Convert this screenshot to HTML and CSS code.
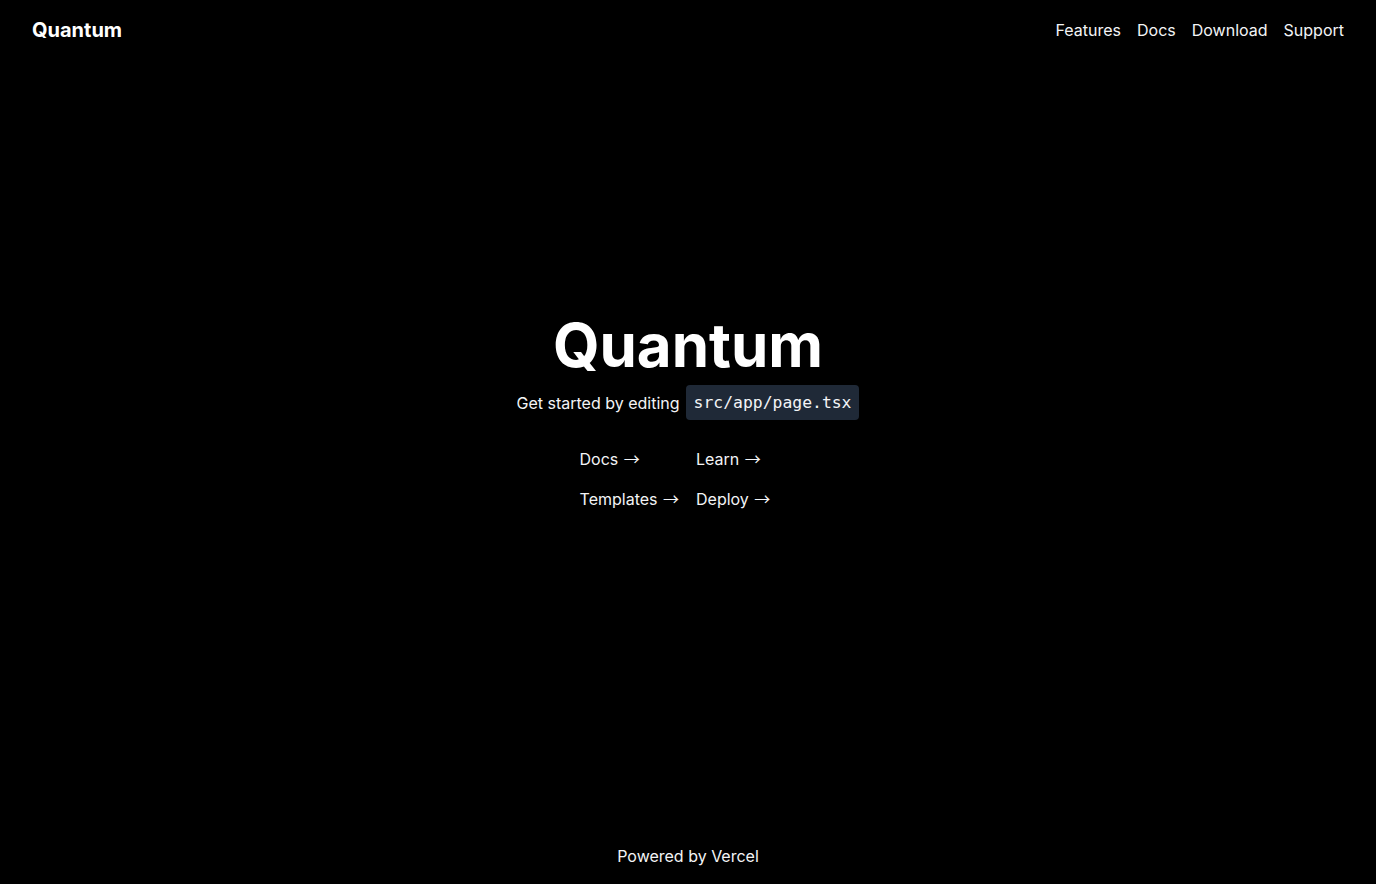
FILE: index.html
```html
<!DOCTYPE html>
<html lang="en">
<head>
<meta charset="utf-8">
<title>Quantum</title>
<link rel="stylesheet" href="styles.css">
</head>
<body>
<div class="page">
  <header class="header">
    <a class="brand" href="#">Quantum</a>
    <nav class="nav">
      <a href="#">Features</a>
      <a href="#">Docs</a>
      <a href="#">Download</a>
      <a href="#">Support</a>
    </nav>
  </header>
  <main class="main">
    <h1 class="title">Quantum</h1>
    <p class="subtitle">Get started by editing <code class="code">src/app/page.tsx</code></p>
    <div class="links">
      <a href="#">Docs <span class="arrow">→</span></a>
      <a href="#">Learn <span class="arrow">→</span></a>
      <a href="#">Templates <span class="arrow">→</span></a>
      <a href="#">Deploy <span class="arrow">→</span></a>
    </div>
  </main>
  <footer class="footer">Powered by Vercel</footer>
</div>
</body>
</html>
```
FILE: styles.css
```css
* { box-sizing: border-box; }
html, body { margin: 0; padding: 0; }
body {
  background: #000;
  color: #fff;
  font-family: Inter, "Noto Sans", sans-serif;
}
a { color: inherit; text-decoration: none; }
.page {
  min-height: 100vh;
  display: flex;
  flex-direction: column;
}
.header {
  display: flex;
  justify-content: space-between;
  align-items: center;
  padding: 16px 32px;
  height: 60px;
}
.brand {
  font-size: 20px;
  line-height: 28px;
  font-weight: 700;
  color: #fff;
}
.nav {
  display: flex;
  gap: 16px;
  font-size: 16px;
  line-height: 24px;
  color: #f3f4f6;
}
.main {
  flex: 1;
  display: flex;
  flex-direction: column;
  align-items: center;
  padding-top: 255px;
}
.title {
  margin: 0;
  font-size: 60px;
  line-height: 60px;
  font-weight: 700;
  color: #fff;
}
.subtitle {
  margin: 10px 0 0;
  font-size: 16px;
  line-height: 24px;
  color: #f3f4f6;
  display: flex;
  align-items: center;
  gap: 6px;
}
.code {
  font-family: "DejaVu Sans Mono", monospace;
  font-size: 16.4px;
  line-height: 19px;
  background: #1f2937;
  border-radius: 4px;
  padding: 8px 8px;
  color: #f3f4f6;
}
.links {
  margin-top: 27px;
  display: grid;
  grid-template-columns: repeat(2, minmax(0, 1fr));
  width: fit-content;
  column-gap: 16px;
  row-gap: 16px;
  font-size: 16px;
  line-height: 24px;
  color: #f3f4f6;
}
.links a {
  display: block;
  height: 24px;
  white-space: nowrap;
}
.arrow {
  font-family: "Noto Sans CJK JP", sans-serif;
  font-size: 16px;
  line-height: 16px;
  margin-left: 1px;
  margin-right: 1px;
}
.footer {
  text-align: center;
  padding: 16px 0;
  font-size: 16px;
  line-height: 24px;
  color: #f3f4f6;
}
```
